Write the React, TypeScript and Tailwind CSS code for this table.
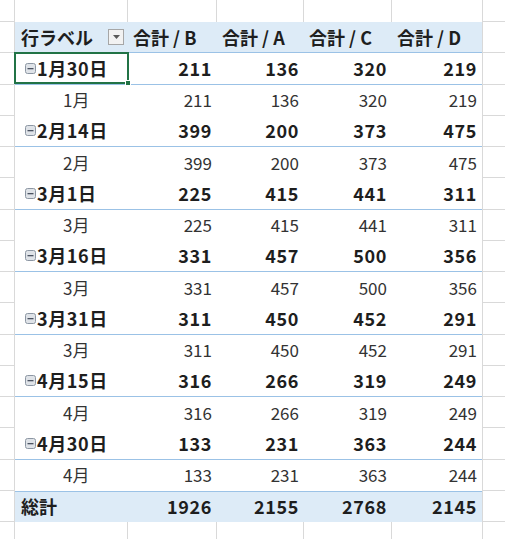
import React from "react";

type Group = {
  date: string;
  month: string;
  values: number[];
};

const groups: Group[] = [
  { date: "1月30日", month: "1月", values: [211, 136, 320, 219] },
  { date: "2月14日", month: "2月", values: [399, 200, 373, 475] },
  { date: "3月1日", month: "3月", values: [225, 415, 441, 311] },
  { date: "3月16日", month: "3月", values: [331, 457, 500, 356] },
  { date: "3月31日", month: "3月", values: [311, 450, 452, 291] },
  { date: "4月15日", month: "4月", values: [316, 266, 319, 249] },
  { date: "4月30日", month: "4月", values: [133, 231, 363, 244] },
];

const totals = [1926, 2155, 2768, 2145];
const headers = ["合計 / B", "合計 / A", "合計 / C", "合計 / D"];
const valueWidths = ["w-[89px]", "w-[87px]", "w-[88px]", "w-[90px]"];

const MinusBox = () => (
  <svg width="11" height="11" viewBox="0 0 11 11" className="shrink-0">
    <rect x="0.5" y="0.5" width="10" height="10" rx="2" fill="#dfe3e8" stroke="#8c96a3" />
    <rect x="2.5" y="5" width="6" height="1.3" fill="#4a5260" />
  </svg>
);

// gridline strip above / below the pivot table
const GridStrip = ({ height, edge }: { height: string; edge: string }) => (
  <div className={`flex ${height}`}>
    <div className={`w-[15px] border-r border-[#d9d9d9] ${edge}`} />
    <div className="w-[113px] border-r border-[#d9d9d9]" />
    <div className="w-[89px] border-r border-[#d9d9d9]" />
    <div className="w-[87px] border-r border-[#d9d9d9]" />
    <div className="w-[88px] border-r border-[#d9d9d9]" />
    <div className="w-[90px]" />
    <div className={`flex-1 border-l border-[#d9d9d9] ${edge}`} />
  </div>
);

const SheetRow = ({ children }: { children: React.ReactNode }) => (
  <div className="flex h-[31.25px]">
    <div className="w-[15px] border-r border-b border-[#d9d9d9]" />
    <div className="flex w-[467px]">{children}</div>
    <div className="flex-1 border-l border-b border-[#d9d9d9]" />
  </div>
);

const boldText = "font-bold text-[18px] tracking-[0.6px] text-[#1e1e1e]";

const App = () => {
  return (
    <div
      className="w-[505px] h-[539px] overflow-hidden bg-white text-[17px] text-[#222]"
      style={{ fontFamily: '"Noto Sans CJK JP", "Noto Sans", sans-serif' }}
    >
      <GridStrip height="h-[22px]" edge="border-b" />

      <SheetRow>
        <div className={`flex w-full items-center bg-[#ddebf7] border-b border-[#9bc2e6] ${boldText}`}>
          <div className="flex w-[113px] items-center justify-between pl-[6px] pr-[4px]">
            <span className="tracking-[0px]">行ラベル</span>
            <span className="flex h-[16px] w-[16px] items-center justify-center border border-[#a6a6a6] bg-[#f2f2f2]">
              <svg width="7" height="4" viewBox="0 0 7 4">
                <path d="M0 0h7L3.5 4z" fill="#595959" />
              </svg>
            </span>
          </div>
          {headers.map((h, i) => (
            <div key={h} className={`${valueWidths[i]} pl-[5px] whitespace-nowrap tracking-[0px]`}>
              {h}
            </div>
          ))}
        </div>
      </SheetRow>

      {groups.map((g, gi) => (
        <React.Fragment key={g.date}>
          <SheetRow>
            <div className={`flex w-full items-center bg-white border-b border-[#9bc2e6] ${boldText}`}>
              <div className="relative flex h-full w-[113px] items-center gap-[1px] pl-[10px]">
                <MinusBox />
                <span>{g.date}</span>
                {gi === 0 && (
                  <div className="absolute -inset-x-[1px] -top-[1px] bottom-[0px] border-2 border-[#217346]">
                    <div className="absolute -right-[4px] -bottom-[4px] h-[6px] w-[6px] bg-[#217346] border border-white" />
                  </div>
                )}
              </div>
              {g.values.map((v, i) => (
                <div key={i} className={`${valueWidths[i]} pr-[5px] text-right`}>
                  {v}
                </div>
              ))}
            </div>
          </SheetRow>
          <SheetRow>
            <div className="flex w-full items-center bg-white text-[#333]">
              <div className="w-[113px] pl-[48px]">{g.month}</div>
              {g.values.map((v, i) => (
                <div key={i} className={`${valueWidths[i]} pr-[5px] text-right`}>
                  {v}
                </div>
              ))}
            </div>
          </SheetRow>
        </React.Fragment>
      ))}

      <SheetRow>
        <div className={`flex w-full items-center bg-[#ddebf7] border-t border-[#9bc2e6] ${boldText}`}>
          <div className="w-[113px] pl-[6px] tracking-[0px]">総計</div>
          {totals.map((v, i) => (
            <div key={i} className={`${valueWidths[i]} pr-[5px] text-right`}>
              {v}
            </div>
          ))}
        </div>
      </SheetRow>

      <GridStrip height="h-[17px]" edge="" />
    </div>
  );
};

export default App;
